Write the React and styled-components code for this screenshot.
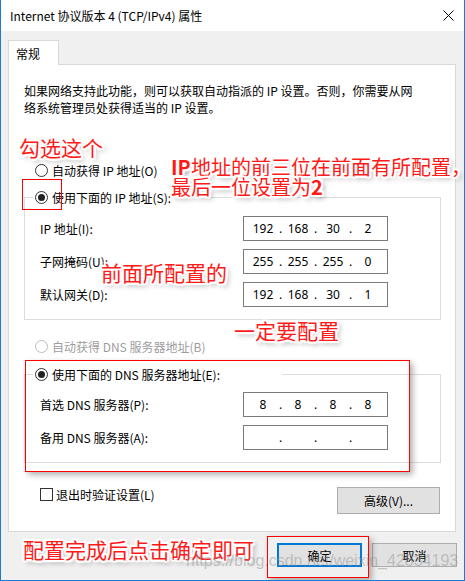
import React from "react";
import styled, { createGlobalStyle } from "styled-components";

const GlobalStyle = createGlobalStyle`
  html, body {
    margin: 0;
    padding: 0;
    background: #ffffff;
  }
  body {
    font-family: "Noto Sans CJK SC", "Noto Sans", sans-serif;
    font-size: 12px;
    color: #000;
  }
`;

const Window = styled.div`
  position: relative;
  width: 465px;
  height: 581px;
  box-sizing: border-box;
  border: 1px solid #1a7ad4;
  border-top: none;
  display: flex;
  flex-direction: column;
  background: #f0f0f0;
  overflow: hidden;
`;

const TitleBar = styled.div`
  height: 31px;
  flex: none;
  background: #fff;
  display: flex;
  align-items: center;
  justify-content: space-between;
  padding: 0 10px 0 9px;
  font-size: 12px;
`;

const Body = styled.div`
  flex: 1;
  padding: 9px 7px 0 7px;
  display: flex;
  flex-direction: column;
`;

const Tab = styled.div`
  position: relative;
  z-index: 1;
  align-self: flex-start;
  width: 51px;
  height: 25px;
  box-sizing: border-box;
  margin-bottom: -1px;
  padding-left: 7px;
  display: flex;
  align-items: center;
  background: #fff;
  border: 1px solid #d9d9d9;
  border-bottom: none;
`;

const Panel = styled.div`
  margin-right: 1px;
  background: #fff;
  border: 1px solid #d9d9d9;
  padding: 0 14px 17px 15px;
  display: flex;
  flex-direction: column;
`;

const Description = styled.p`
  margin: 17px 0 0 0;
  line-height: 17px;
`;

const RadioRow = styled.label`
  height: 20px;
  margin: ${(p) => p.$mt}px 0 0 11px;
  display: flex;
  align-items: center;
  gap: 4px;
  color: ${(p) => (p.$disabled ? "#9d9d9d" : "#000")};
`;

const Radio = styled.span`
  width: 13px;
  height: 13px;
  box-sizing: border-box;
  border-radius: 50%;
  border: 1px solid ${(p) => (p.$disabled ? "#bcbcbc" : "#333")};
  background: #fff;
  display: flex;
  align-items: center;
  justify-content: center;
  flex: none;

  &::after {
    content: "";
    width: 7px;
    height: 7px;
    border-radius: 50%;
    background: ${(p) => (p.$checked ? "#222" : "transparent")};
  }
`;

const Group = styled.fieldset`
  margin: ${(p) => p.$mt}px 0 0 0;
  min-width: 0;
  border: 1px solid #dcdcdc;
  padding: ${(p) => p.$pt}px 52px 12px 15px;
`;

const Legend = styled.legend`
  margin-left: -7px;
  padding: 0 2px;
  height: 20px;
  box-sizing: border-box;
  width: ${(p) => p.$width || "auto"};
  display: flex;
  align-items: center;
  gap: 4px;
`;

const FieldGrid = styled.div`
  display: grid;
  grid-template-columns: 203px 145px;
  row-gap: 8px;
  align-items: center;
`;

const IpBox = styled.div`
  height: 25px;
  box-sizing: border-box;
  border: 1px solid #7a7a7a;
  padding-left: 4px;
  display: flex;
  align-items: center;
  font-family: "Noto Sans", "Noto Sans CJK SC", sans-serif;
  font-size: 12px;
`;

const Octet = styled.span`
  width: 30px;
  text-align: center;
`;

const Dot = styled.span`
  width: 5px;
  text-align: center;
`;

const OptionRow = styled.div`
  margin: 24px 1px 0 16px;
  display: flex;
  align-items: flex-start;
  justify-content: space-between;
`;

const CheckLabel = styled.label`
  height: 15px;
  display: flex;
  align-items: center;
  gap: 3px;
`;

const CheckBox = styled.span`
  width: 13px;
  height: 13px;
  box-sizing: border-box;
  border: 1px solid #333;
  background: #fff;
`;

const Button = styled.button`
  width: ${(p) => p.$w}px;
  height: ${(p) => p.$h}px;
  box-sizing: border-box;
  background: #e1e1e1;
  border: ${(p) => (p.$primary ? "2px solid #0078d7" : "1px solid #adadad")};
  font-family: inherit;
  font-size: 12px;
  color: #000;
  padding: 0;
`;

const ButtonRow = styled.div`
  margin-top: 11px;
  display: flex;
  justify-content: flex-end;
  gap: 10px;
`;

const Note = styled.div`
  position: absolute;
  left: ${(p) => p.$x}px;
  top: ${(p) => p.$y}px;
  z-index: 5;
  white-space: nowrap;
  font-size: ${(p) => p.$size || 21}px;
  line-height: ${(p) => p.$size || 21}px;
  color: #ff1a1a;
  text-shadow: -2px 0 0 #fff, 2px 0 0 #fff, 0 -2px 0 #fff, 0 2px 0 #fff,
    -1px -1px 0 #fff, 1px -1px 0 #fff, -1px 1px 0 #fff, 1px 1px 0 #fff,
    -2px -2px 1px #fff, 2px -2px 1px #fff, -2px 2px 1px #fff, 2px 2px 1px #fff,
    3px 3px 5px rgba(0, 0, 0, 0.45);

  b {
    font-weight: 700;
  }
`;

const Mark = styled.div`
  position: absolute;
  left: ${(p) => p.$x}px;
  top: ${(p) => p.$y}px;
  width: ${(p) => p.$w}px;
  height: ${(p) => p.$h}px;
  box-sizing: border-box;
  border: 1px solid #ff0000;
  box-shadow: ${(p) => (p.$shadow ? "3px 3px 6px rgba(0,0,0,0.3)" : "none")};
  z-index: 4;
`;

const Watermark = styled.div`
  position: absolute;
  left: 185px;
  top: 551px;
  z-index: 6;
  font-family: "Liberation Sans", Arial, sans-serif;
  font-size: 16px;
  line-height: 20px;
  color: rgba(150, 150, 150, 0.5);
  white-space: nowrap;
`;

const CloseIcon = () => (
  <svg width="11" height="11" viewBox="0 0 11 11">
    <path d="M0.5 0.5 L10.5 10.5 M10.5 0.5 L0.5 10.5" stroke="#000" strokeWidth="1" />
  </svg>
);

const IpField = ({ value }) => {
  const parts = value ? value.split(".") : ["", "", "", ""];
  return (
    <IpBox>
      {parts.map((part, i) => (
        <React.Fragment key={i}>
          {i > 0 && <Dot>.</Dot>}
          <Octet>{part}</Octet>
        </React.Fragment>
      ))}
    </IpBox>
  );
};

const ipRows = [
  { label: "IP 地址(I):", value: "192.168.30.2" },
  { label: "子网掩码(U):", value: "255.255.255.0" },
  { label: "默认网关(D):", value: "192.168.30.1" },
];

const dnsRows = [
  { label: "首选 DNS 服务器(P):", value: "8.8.8.8" },
  { label: "备用 DNS 服务器(A):", value: "" },
];

const App = () => {
  return (
    <>
      <GlobalStyle />
      <Window>
        <TitleBar>
          <span>Internet 协议版本 4 (TCP/IPv4) 属性</span>
          <CloseIcon />
        </TitleBar>
        <Body>
          <Tab>常规</Tab>
          <Panel>
            <Description>
              如果网络支持此功能，则可以获取自动指派的 IP 设置。否则，你需要从网
              <br />
              络系统管理员处获得适当的 IP 设置。
            </Description>

            <RadioRow $mt={44}>
              <Radio />
              自动获得 IP 地址(O)
            </RadioRow>
            <Group $mt={7} $pt={9}>
              <Legend>
                <Radio $checked />
                使用下面的 IP 地址(S):
              </Legend>
              <FieldGrid>
                {ipRows.map((row) => (
                  <React.Fragment key={row.label}>
                    <span>{row.label}</span>
                    <IpField value={row.value} />
                  </React.Fragment>
                ))}
              </FieldGrid>
            </Group>

            <RadioRow $mt={16} $disabled>
              <Radio $disabled />
              自动获得 DNS 服务器地址(B)
            </RadioRow>
            <Group $mt={8} $pt={8}>
              <Legend $width="249px">
                <Radio $checked />
                使用下面的 DNS 服务器地址(E):
              </Legend>
              <FieldGrid>
                {dnsRows.map((row) => (
                  <React.Fragment key={row.label}>
                    <span>{row.label}</span>
                    <IpField value={row.value} />
                  </React.Fragment>
                ))}
              </FieldGrid>
            </Group>

            <OptionRow>
              <CheckLabel>
                <CheckBox />
                退出时验证设置(L)
              </CheckLabel>
              <Button $w={103} $h={27}>高级(V)...</Button>
            </OptionRow>
          </Panel>
          <ButtonRow>
            <Button $w={85} $h={24} $primary>确定</Button>
            <Button $w={85} $h={24}>取消</Button>
          </ButtonRow>
        </Body>

        <Note $x={18} $y={137}>勾选这个</Note>
        <Note $x={170} $y={157} $size={20}>
          <b>IP</b>地址的前三位在前面有所配置，
          <br />
          最后一位设置为<b>2</b>
        </Note>
        <Note $x={100} $y={262}>前面所配置的</Note>
        <Note $x={233} $y={320}>一定要配置</Note>
        <Note $x={22} $y={539}>配置完成后点击确定即可</Note>

        <Mark $x={21} $y={179} $w={40} $h={31} />
        <Mark $x={24} $y={360} $w={385} $h={112} $shadow />
        <Mark $x={266} $y={536} $w={102} $h={42} $shadow />

        <Watermark>https://blog.csdn.net/weixin_42834193</Watermark>
      </Window>
    </>
  );
};

export default App;
